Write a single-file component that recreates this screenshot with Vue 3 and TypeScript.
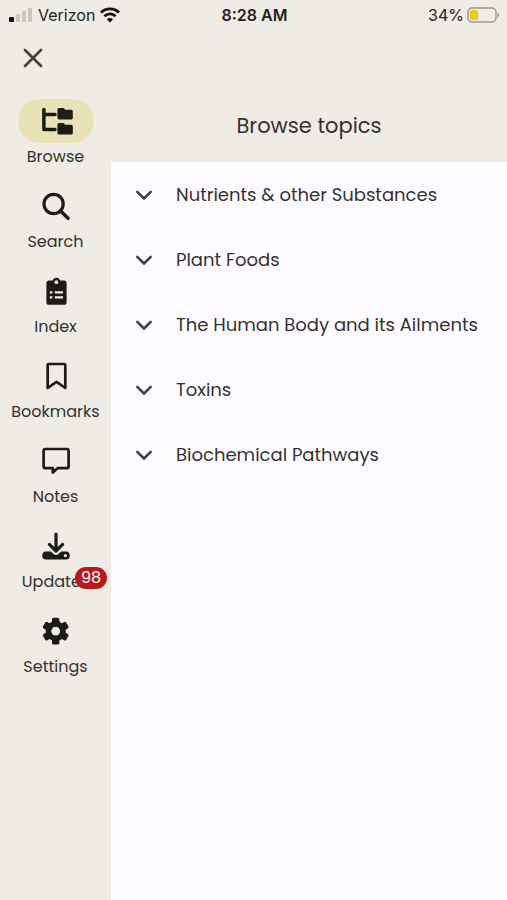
<script setup lang="ts">
import { ref } from 'vue'

type IconName = 'browse' | 'search' | 'index' | 'bookmark' | 'note' | 'update' | 'settings'

interface NavItem {
  label: string
  icon: IconName
  badge?: number
}

const navItems: NavItem[] = [
  { label: 'Browse', icon: 'browse' },
  { label: 'Search', icon: 'search' },
  { label: 'Index', icon: 'index' },
  { label: 'Bookmarks', icon: 'bookmark' },
  { label: 'Notes', icon: 'note' },
  { label: 'Updates', icon: 'update', badge: 98 },
  { label: 'Settings', icon: 'settings' },
]

const topics: string[] = [
  'Nutrients & other Substances',
  'Plant Foods',
  'The Human Body and its Ailments',
  'Toxins',
  'Biochemical Pathways',
]

const active = ref('Browse')
const gearTeeth = [0, 60, 120, 180, 240, 300]
</script>

<template>
  <div class="app">
    <header class="status">
      <div class="carrier">
        <svg width="24" height="16" viewBox="0 0 24 16" aria-hidden="true">
          <rect x="0" y="10" width="5" height="5" rx="1" fill="#111" />
          <g fill="#c8c5bf">
            <rect x="7" y="7" width="4" height="8" rx="1" />
            <rect x="13" y="4" width="4" height="11" rx="1" />
            <rect x="19" y="1" width="4" height="14" rx="1" />
          </g>
        </svg>
        <span class="carrier-name">Verizon</span>
        <svg width="20" height="16" viewBox="0 0 20 16" fill="none" stroke="#111" stroke-width="2.8" aria-hidden="true">
          <path d="M1 5.6C6 .6 14 .6 19 5.6" />
          <path d="M4.4 9.2C7.6 6.1 12.4 6.1 15.6 9.2" />
          <path d="M10 15.5L6.9 12.2C8.6 10.5 11.4 10.5 13.1 12.2Z" fill="#111" stroke="none" />
        </svg>
      </div>
      <span class="clock">8:28 AM</span>
      <div class="battery">
        <span>34%</span>
        <svg width="33" height="16" viewBox="0 0 33 16" aria-hidden="true">
          <rect x="1" y="1" width="28" height="14" rx="4" fill="none" stroke="#9c9992" stroke-width="1.5" />
          <rect x="3" y="3" width="8" height="10" rx="2" fill="#f6c90e" />
          <path d="M30.5 5.5C32.8 6 32.8 10 30.5 10.5Z" fill="#9c9992" />
        </svg>
      </div>
    </header>

    <div class="body">
      <aside class="rail">
        <button class="close" type="button" aria-label="Close">
          <svg width="20" height="20" viewBox="0 0 20 20" fill="none" stroke="#45422f" stroke-width="2.7" stroke-linecap="round">
            <path d="M2 2L18 18M18 2L2 18" />
          </svg>
        </button>
        <nav class="nav">
          <button
            v-for="item in navItems"
            :key="item.label"
            type="button"
            class="nav-item"
            :class="{ active: active === item.label }"
            @click="active = item.label"
          >
            <span class="pill">
              <svg width="34" height="28" viewBox="0 0 34 28" fill="none" stroke="#1d1b16" aria-hidden="true">
                <template v-if="item.icon === 'browse'">
                  <path d="M4.9 2.6V22.6H16M4.9 7.5H16" stroke-width="3.5" stroke-linecap="round" stroke-linejoin="round" />
                  <path d="M20 1H24.5L26.3 2.8H32.2Q33.8 2.8 33.8 4.4V10.8Q33.8 12.4 32.2 12.4H20Q18.4 12.4 18.4 10.8V2.6Q18.4 1 20 1Z" fill="#1d1b16" stroke="none" />
                  <path d="M20 16H24.5L26.3 17.8H32.2Q33.8 17.8 33.8 19.4V25.9Q33.8 27.5 32.2 27.5H20Q18.4 27.5 18.4 25.9V17.6Q18.4 16 20 16Z" fill="#1d1b16" stroke="none" />
                </template>
                <template v-else-if="item.icon === 'search'">
                  <circle cx="14.6" cy="12" r="9.6" stroke-width="3.2" />
                  <path d="M21.6 19L29 26.2" stroke-width="3.4" stroke-linecap="round" />
                </template>
                <template v-else-if="item.icon === 'index'">
                  <path
                    d="M10 3.6H13.6Q14.4 .7 17.3 .7T21 3.6H25Q27.6 3.6 27.6 6.2V25.2Q27.6 27.8 25 27.8H10Q7.4 27.8 7.4 25.2V6.2Q7.4 3.6 10 3.6Z"
                    fill="#1d1b16"
                    stroke="none"
                  />
                  <circle cx="17.4" cy="5.2" r="1.9" fill="#efece5" stroke="none" />
                  <path d="M10.8 15.3H13.4M15.8 15.3H24M10.8 20.3H13.4M15.8 20.3H24" stroke="#efece5" stroke-width="2.3" />
                </template>
                <path
                  v-else-if="item.icon === 'bookmark'"
                  d="M10 2H25.2Q26.3 2 26.3 3.1V26L17.5 19.8L8.7 26V3.1Q8.7 2 10 2Z"
                  stroke-width="2.7"
                  stroke-linejoin="round"
                />
                <path
                  v-else-if="item.icon === 'note'"
                  d="M6.6 2H27.6Q29.6 2 29.6 4V19.2Q29.6 21.2 27.6 21.2H18.6L13.8 25.6V21.2H6.6Q4.6 21.2 4.6 19.2V4Q4.6 2 6.6 2Z"
                  stroke-width="2.7"
                  stroke-linejoin="round"
                />
                <template v-else-if="item.icon === 'update'">
                  <path
                    d="M7 19.4H11.8L14.6 22Q17 24 19.4 22L22.2 19.4H27Q30.8 19.6 30.8 23.5T27 27.6H7Q3.2 27.4 3.2 23.5T7 19.4Z"
                    fill="#1d1b16"
                    stroke="none"
                  />
                  <circle cx="26.4" cy="23.6" r="1.6" fill="#efece5" stroke="none" />
                  <path d="M17 2V18.5M10.4 12.4L17 19L23.6 12.4" stroke-width="3.2" stroke-linecap="round" stroke-linejoin="round" />
                </template>
                <template v-else>
                  <rect
                    v-for="angle in gearTeeth"
                    :key="angle"
                    x="13"
                    y=".8"
                    width="7.4"
                    height="9"
                    rx="1.6"
                    fill="#1d1b16"
                    stroke="none"
                    :transform="`rotate(${angle} 16.7 14.2)`"
                  />
                  <circle cx="16.7" cy="14.2" r="7.3" stroke-width="5.6" />
                </template>
              </svg>
            </span>
            <span class="label">{{ item.label }}</span>
            <span v-if="item.badge" class="badge">{{ item.badge }}</span>
          </button>
        </nav>
      </aside>

      <main class="main">
        <h1 class="title">Browse topics</h1>
        <ul class="topics">
          <li v-for="topic in topics" :key="topic">
            <button type="button" class="topic">
              <svg width="18" height="12" viewBox="0 0 18 12" fill="none" stroke="#45433f" stroke-width="2.6" stroke-linecap="round" stroke-linejoin="round" aria-hidden="true">
                <path d="M2.3 2.8L9 9.5L15.7 2.8" />
              </svg>
              <span>{{ topic }}</span>
            </button>
          </li>
        </ul>
      </main>
    </div>
  </div>
</template>

<style>
body {
  margin: 0;
  background: #efece5;
}
</style>

<style scoped>
.app {
  display: flex;
  flex-direction: column;
  min-height: 100vh;
  background: #efece5;
  color: #34322f;
  font-family: Poppins, Inter, sans-serif;
}

button {
  padding: 0;
  border: 0;
  background: none;
  color: inherit;
  font: inherit;
  cursor: pointer;
}

.status {
  display: grid;
  grid-template-columns: 1fr auto 1fr;
  align-items: center;
  height: 30px;
  padding: 0 7px 0 9px;
  font-family: Inter, sans-serif;
  font-size: 16px;
  color: #24221f;
}

.carrier,
.battery {
  display: flex;
  align-items: center;
  gap: 5px;
}

.battery {
  justify-content: flex-end;
  gap: 3px;
}

.clock {
  font-weight: 600;
}

.body {
  display: flex;
  flex: 1;
}

.rail {
  flex: none;
  width: 111px;
}

.close {
  display: flex;
  align-items: center;
  justify-content: center;
  width: 44px;
  height: 44px;
  margin: 6px 0 19px 11px;
}

.nav {
  display: flex;
  flex-direction: column;
  gap: 13px;
}

.nav-item {
  position: relative;
  display: flex;
  flex-direction: column;
  align-items: center;
  width: 100%;
}

.pill {
  display: flex;
  align-items: center;
  justify-content: center;
  width: 76px;
  height: 44px;
  border-radius: 22px;
}

.active .pill {
  background: #eae2b7;
}

.label {
  font-size: 16px;
  line-height: 28px;
}

.badge {
  position: absolute;
  right: 4px;
  bottom: 7px;
  width: 32px;
  border-radius: 11px;
  background: #ba1a1a;
  color: #fff;
  font-size: 16px;
  line-height: 22px;
}

.main {
  display: flex;
  flex: 1;
  flex-direction: column;
  min-width: 0;
}

.title {
  margin: 0;
  padding: 80px 0 20px;
  font-size: 21px;
  font-weight: 400;
  line-height: 32px;
  text-align: center;
}

.topics {
  flex: 1;
  margin: 0;
  padding: 0;
  background: #fdfbff;
  list-style: none;
}

.topic {
  display: flex;
  align-items: center;
  gap: 23px;
  width: 100%;
  min-height: 65px;
  padding-left: 24px;
  font-size: 18px;
  line-height: 24px;
  text-align: left;
}
</style>
